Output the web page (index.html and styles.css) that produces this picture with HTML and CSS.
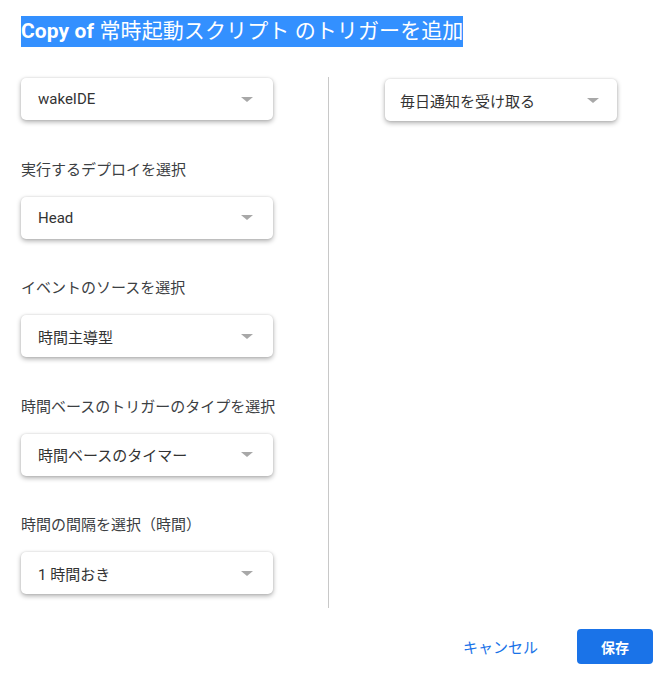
FILE: index.html
```html
<!DOCTYPE html>
<html lang="ja">
<head>
<meta charset="utf-8">
<title>トリガーを追加</title>
<link rel="stylesheet" href="styles.css">
</head>
<body>
<div class="dialog">
  <h1 class="title"><span class="title-hl"><b>Copy of</b> 常時起動スクリプト のトリガーを追加</span></h1>
  <div class="content">
    <div class="col col-left">
      <div class="select first"><span>wakeIDE</span><i class="arrow"></i></div>
      <div class="label">実行するデプロイを選択</div>
      <div class="select"><span>Head</span><i class="arrow"></i></div>
      <div class="label">イベントのソースを選択</div>
      <div class="select"><span>時間主導型</span><i class="arrow"></i></div>
      <div class="label">時間ベースのトリガーのタイプを選択</div>
      <div class="select"><span>時間ベースのタイマー</span><i class="arrow"></i></div>
      <div class="label">時間の間隔を選択（時間）</div>
      <div class="select"><span>1 時間おき</span><i class="arrow"></i></div>
    </div>
    <div class="col col-right">
      <div class="select narrow"><span>毎日通知を受け取る</span><i class="arrow"></i></div>
    </div>
  </div>
  <div class="footer">
    <button class="btn btn-text">キャンセル</button>
    <button class="btn btn-primary">保存</button>
  </div>
</div>
</body>
</html>
```

FILE: styles.css
```css
html, body {
  margin: 0;
  padding: 0;
  background: #ffffff;
}
body {
  font-family: Roboto, "Noto Sans CJK JP", sans-serif;
  color: #3c4043;
}
.dialog {
  padding: 16px 18px 0 21px;
}
.title {
  margin: 0;
  font-size: 21px;
  font-weight: 400;
  line-height: 31px;
  height: 31px;
  white-space: nowrap;
}
.title-hl {
  display: inline-block;
  background: #3390ff;
  color: #ffffff;
  height: 31px;
  line-height: 31px;
  letter-spacing: 0.1px;
}
.title-hl b {
  font-weight: 700;
}
.content {
  display: flex;
  margin-top: 30px;
}
.col-left {
  width: 252px;
  padding-right: 55px;
  padding-bottom: 14px;
  border-right: 1px solid #c8c8c8;
}
.col-right {
  padding-left: 56px;
  padding-top: 2px;
}
.select {
  height: 42px;
  box-sizing: border-box;
  display: flex;
  align-items: center;
  justify-content: space-between;
  padding: 0 20px 0 17px;
  background: #ffffff;
  border-radius: 5px;
  box-shadow: 0 2px 5px rgba(0, 0, 0, 0.32), 0 0 2px rgba(0, 0, 0, 0.12);
  font-size: 15px;
  color: #333333;
  white-space: nowrap;
}
.select.first {
  margin-top: 1px;
}
.select.narrow {
  width: 232px;
  padding: 0 18px 0 15px;
}
.arrow {
  width: 0;
  height: 0;
  border-left: 6px solid transparent;
  border-right: 6px solid transparent;
  border-top: 5px solid #a8a8a8;
}
.label {
  font-size: 15px;
  line-height: 22px;
  margin-top: 38.5px;
  margin-bottom: 16px;
  color: #3c4043;
  white-space: nowrap;
}
.footer {
  display: flex;
  justify-content: flex-end;
  align-items: center;
  margin-top: 21px;
}
.btn {
  font-family: Roboto, "Noto Sans CJK JP", sans-serif;
  border: none;
  cursor: pointer;
  height: 35px;
  border-radius: 4px;
}
.btn-text {
  background: transparent;
  color: #1a73e8;
  font-size: 15px;
  padding: 0 8px;
  margin-right: 31px;
}
.btn-primary {
  width: 76px;
  background: #1a73e8;
  color: #ffffff;
  font-size: 14px;
  font-weight: 700;
}
```
